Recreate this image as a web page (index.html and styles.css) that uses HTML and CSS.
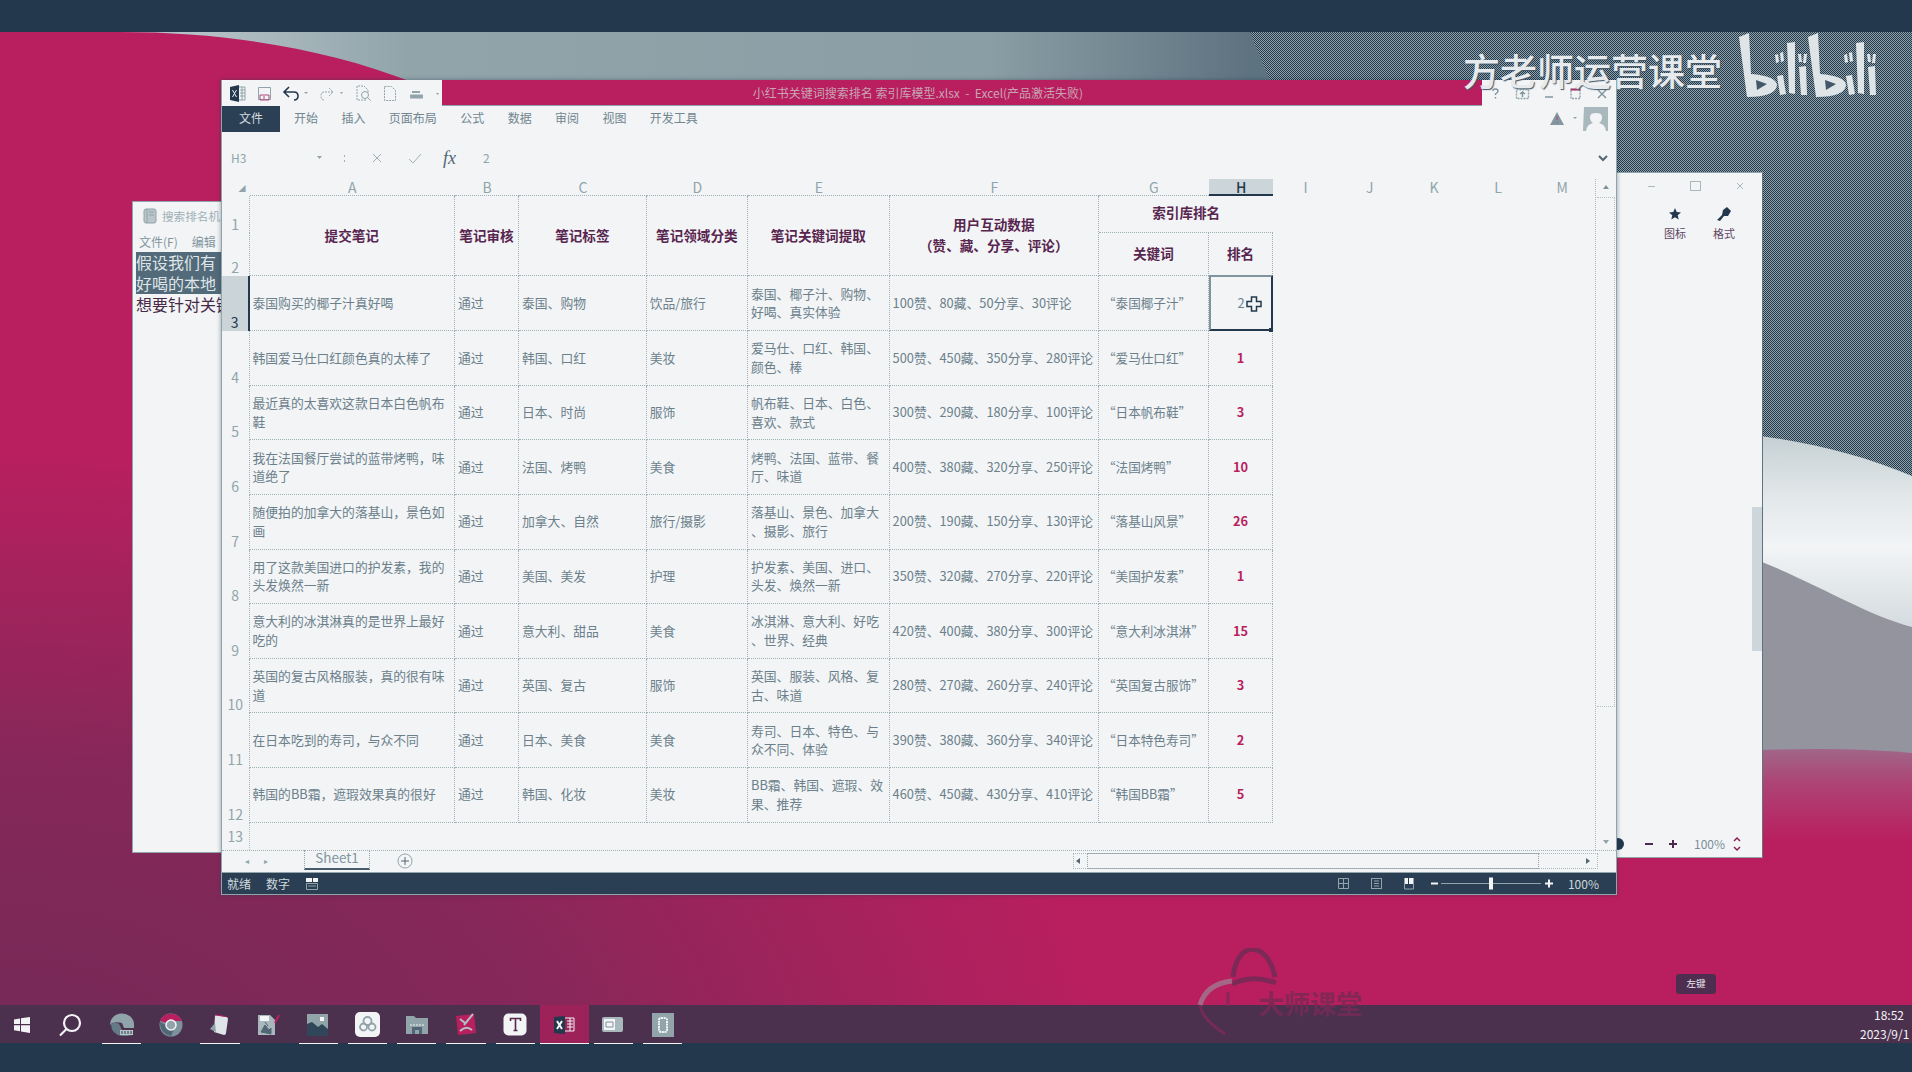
FILE: index.html
```html
<!DOCTYPE html>
<html lang="zh-CN">
<head>
<meta charset="utf-8">
<title>索引库模型</title>
<link rel="stylesheet" href="styles.css">
</head>
<body>
<div class="desktop">
<svg class="wallpaper" viewBox="0 0 1912 1072" width="1912" height="1072">
  <defs>
    <linearGradient id="top" x1="200" x2="1250" y1="0" y2="0" gradientUnits="userSpaceOnUse"><stop offset="0" stop-color="#b4c1c6"/><stop offset=".2" stop-color="#90a4aa"/><stop offset=".75" stop-color="#8a9ea5"/><stop offset="1" stop-color="#5e7380"/></linearGradient>
    <linearGradient id="white" x1="0" x2="0" y1="430" y2="625" gradientUnits="userSpaceOnUse"><stop offset="0" stop-color="#c3ced1"/><stop offset=".35" stop-color="#e3e8ea"/><stop offset=".6" stop-color="#f2f4f6"/><stop offset="1" stop-color="#d5dcdf"/></linearGradient>
    <linearGradient id="low" x1="0" x2="0" y1="745" y2="840" gradientUnits="userSpaceOnUse"><stop offset="0" stop-color="#9f6a8b"/><stop offset=".4" stop-color="#ad4475"/><stop offset="1" stop-color="#b91f5f"/></linearGradient>
    <radialGradient id="shade" cx="0" cy="0" r="1" gradientUnits="userSpaceOnUse" gradientTransform="translate(0 1072) scale(1100 620)"><stop offset="0" stop-color="#23384d" stop-opacity=".46"/><stop offset=".5" stop-color="#23384d" stop-opacity=".34"/><stop offset="1" stop-color="#23384d" stop-opacity="0"/></radialGradient>
    <pattern id="weave" width="2" height="2" patternUnits="userSpaceOnUse"><rect width="2" height="2" fill="#90a4aa"/><rect width="1" height="1" fill="#23384d"/><rect x="1" y="1" width="1" height="1" fill="#23384d"/></pattern>
  </defs>
  <rect width="1912" height="1072" fill="#b91f5f"/>
  <rect width="1912" height="1072" fill="url(#shade)"/>
  <path d="M120 32C230 32 330 50 412 82H1912V32Z" fill="url(#top)"/>
  <path d="M1250 32H1912V640H1500Z" fill="url(#weave)"/>
  <path d="M1700 430C1780 435 1850 450 1912 476V640H1700Z" fill="url(#white)"/>
  <path d="M1700 540C1800 570 1850 610 1912 627V800H1700Z" fill="#94949f"/>
  <path d="M1700 753Q1830 745 1912 753V860H1700Z" fill="url(#low)"/>
  <rect width="1912" height="32" fill="#23384d"/>
</svg>

<section class="win notes">
  <div class="notes-title"><svg width="14" height="16" viewBox="0 0 14 16"><rect x="1" y="1" width="12" height="14" rx="2" fill="#b9c5c9" stroke="#90a4aa"/><path d="M4 1v14M6 4h5M6 7h5" stroke="#90a4aa"/></svg><span>搜索排名机</span></div>
  <div class="notes-menu"><span>文件(F)</span><span>编辑</span></div>
  <div class="notes-text"><p class="picked">假设我们有</p><p class="picked">好喝的本地</p><p>想要针对关键</p></div>
</section>

<section class="win viewer">
  <div class="viewer-ctl"><svg width="110" height="28" viewBox="0 0 110 28" fill="none" stroke="#a9b8bd"><path d="M4 13.500h7"/><rect x="46.500" y="8.500" width="10" height="9"/><path d="M93 10l6 6M99 10l-6 6"/></svg></div>
  <div class="viewer-tools">
    <div class="tool"><svg width="14" height="14" viewBox="0 0 14 14"><path d="M7 1l1.700 4 4.300.4-3.300 2.800 1 4.300L7 10.200 3.300 12.500l1-4.300L1 5.400 5.300 5z" fill="#23384d"/></svg><span>图标</span></div>
    <div class="tool"><svg width="14" height="14" viewBox="0 0 14 14"><path d="M6 3l4-3 4 4-3 5-4 0-4 5-3-1 5-5z" fill="#23384d"/></svg><span>格式</span></div>
  </div>
  <div class="viewer-mid"><i class="thumb"></i></div>
  <div class="viewer-foot"><svg width="80" height="24" viewBox="0 0 80 24"><circle cx="8" cy="12" r="6" fill="#23384d"/><path d="M35 12h8M59 12h8M63 8v8" stroke="#4b2950" stroke-width="2"/></svg><span>100%</span><svg width="10" height="16" viewBox="0 0 10 16" fill="none" stroke="#8a2055" stroke-width="1.500"><path d="M2 5l3-3 3 3M2 11l3 3 3-3"/></svg></div>
</section>

<main class="win excel">
  <header class="titlebar">
    <svg class="qat" width="220" height="26" viewBox="0 0 220 26" fill="none" stroke="#90a4aa">
      <path d="M8 7l9-2v17l-9-2z" fill="#23384d" stroke="none"/><path d="M10.500 10l4 7M14.500 10l-4 7" stroke="#f2f4f6"/><path d="M17 7h6v13h-6M18 10h5M18 13h5M18 16h5M20 7v13"/>
      <path d="M36.500 7.500h12v12h-12z"/><path d="M38 15h9v5h-9zM42 16v3" stroke="#b04a78"/>
      <path d="M63 12h9q4 0 4 4t-4 4M67 7l-5 5 5 5" stroke="#23384d" stroke-width="1.600"/><path d="M82 12h4l-2 2z" fill="#90a4aa" stroke="none"/>
      <path d="M111 12h-9q-3 0-3 4t3 4M107 8l4 4-4 4" stroke-dasharray="2 1"/><path d="M118 12h3l-1.500 2z" fill="#90a4aa" stroke="none"/>
      <path d="M144 20h-9V6h7l4 4v3" stroke-dasharray="2 1"/><circle cx="143" cy="15" r="3.500"/><path d="M145.500 17.500l3 3"/>
      <path d="M162.500 6.500h7l4 4v10h-11z" stroke-dasharray="2 1"/>
      <path d="M190 12h8M189 15.500h11v2h-11z" stroke-width="1.800"/><path d="M214 13h3l-1.500 2z" fill="#90a4aa" stroke="none"/>
    </svg>
    <div class="caption"><span>小红书关键词搜索排名 索引库模型.xlsx&nbsp;&nbsp;-&nbsp;&nbsp;Excel(产品激活失败)</span></div>
    <svg class="winctl" width="134" height="26" viewBox="0 0 134 26" fill="none" stroke="#7d919a" stroke-width="1.400">
      <path d="M11 11q0-2 2.500-2t2.500 2q0 1.500-2.500 3v1M13.500 17v1.500"/><rect x="34.500" y="9.500" width="12" height="9" stroke="#90a4aa" stroke-dasharray="2 1"/><path d="M40.500 17v-5M38 14l2.500-2 2.500 2"/><path d="M63 17h8"/><rect x="89" y="9.500" width="9" height="9" stroke="#90a4aa" stroke-dasharray="2 1"/><path d="M88.500 9.500h10" stroke="#a53469" stroke-width="2"/><path d="M116 10l8 8M124 10l-8 8"/>
    </svg>
  </header>
  <nav class="ribbon">
    <span class="file">文件</span>
    <div class="tabs"><span>开始</span><span>插入</span><span>页面布局</span><span>公式</span><span>数据</span><span>审阅</span><span>视图</span><span>开发工具</span></div>
    <svg width="68" height="26" viewBox="0 0 68 26"><path d="M9 6l7 13H2z" fill="#8397a0"/><path d="M9 10v4M9 16v1" stroke="#b04a78"/><path d="M25 11h4l-2 2z" fill="#90a4aa"/><path d="M36 1h24v24h-2q-1-7-7-8 3-2 3-6t-6-4-6 4 3 6q-6 1-7 8h-3z" fill="#a9b8bd"/></svg>
  </nav>
  <div class="formula">
    <span class="ref">H3</span>
    <svg width="182" height="26" viewBox="0 0 182 26" fill="none" stroke="#a0b1b6"><path d="M58 11h5l-2.500 3z" fill="#90a4aa" stroke="none"/><path d="M85.500 10v2M85.500 15v2"/><path d="M114 9l8 8M122 9l-8 8M150 14l4 4 8-9"/></svg>
    <em>fx</em><span class="val">2</span>
    <svg class="more" width="12" height="8" viewBox="0 0 12 8"><path d="M2 2l4 4 4-4" fill="none" stroke="#526775" stroke-width="2"/></svg>
  </div>
  <div class="body">
    <div class="sheet">
      <div class="row letters"><span class="corner">◢</span><span>A</span><span>B</span><span>C</span><span>D</span><span>E</span><span>F</span><span>G</span><span class="on">H</span><span>I</span><span>J</span><span>K</span><span>L</span><span>M</span></div>
      <div class="head">
        <span class="n n1">1</span><span class="n n2">2</span>
        <b class="tall">提交笔记</b><b class="tall">笔记审核</b><b class="tall">笔记标签</b><b class="tall">笔记领域分类</b><b class="tall">笔记关键词提取</b><b class="tall">用户互动数据<br>（赞、藏、分享、评论）</b>
        <b class="wide">索引库排名</b><b class="kw">关键词</b><b class="rk">排名</b>
      </div>
      <div class="row"><span class="n on">3</span><span>泰国购买的椰子汁真好喝</span><span>通过</span><span>泰国、购物</span><span>饮品/旅行</span><span>泰国、椰子汁、购物、<br>好喝、真实体验</span><span>100赞、80藏、50分享、30评论</span><span>“泰国椰子汁”</span><span class="rank sel">2<svg class="cursor" width="18" height="18" viewBox="0 0 18 18"><path d="M6.500 2h5v4.500H16v5h-4.500V16h-5v-4.500H2v-5h4.500z" fill="#f2f4f6" stroke="#23384d" stroke-width="1.500"/></svg></span></div>
      <div class="row"><span class="n">4</span><span>韩国爱马仕口红颜色真的太棒了</span><span>通过</span><span>韩国、口红</span><span>美妆</span><span>爱马仕、口红、韩国、<br>颜色、棒</span><span>500赞、450藏、350分享、280评论</span><span>“爱马仕口红”</span><span class="rank">1</span></div>
      <div class="row"><span class="n">5</span><span>最近真的太喜欢这款日本白色帆布<br>鞋</span><span>通过</span><span>日本、时尚</span><span>服饰</span><span>帆布鞋、日本、白色、<br>喜欢、款式</span><span>300赞、290藏、180分享、100评论</span><span>“日本帆布鞋”</span><span class="rank">3</span></div>
      <div class="row"><span class="n">6</span><span>我在法国餐厅尝试的蓝带烤鸭，味<br>道绝了</span><span>通过</span><span>法国、烤鸭</span><span>美食</span><span>烤鸭、法国、蓝带、餐<br>厅、味道</span><span>400赞、380藏、320分享、250评论</span><span>“法国烤鸭”</span><span class="rank">10</span></div>
      <div class="row"><span class="n">7</span><span>随便拍的加拿大的落基山，景色如<br>画</span><span>通过</span><span>加拿大、自然</span><span>旅行/摄影</span><span>落基山、景色、加拿大<br>、摄影、旅行</span><span>200赞、190藏、150分享、130评论</span><span>“落基山风景”</span><span class="rank">26</span></div>
      <div class="row"><span class="n">8</span><span>用了这款美国进口的护发素，我的<br>头发焕然一新</span><span>通过</span><span>美国、美发</span><span>护理</span><span>护发素、美国、进口、<br>头发、焕然一新</span><span>350赞、320藏、270分享、220评论</span><span>“美国护发素”</span><span class="rank">1</span></div>
      <div class="row"><span class="n">9</span><span>意大利的冰淇淋真的是世界上最好<br>吃的</span><span>通过</span><span>意大利、甜品</span><span>美食</span><span>冰淇淋、意大利、好吃<br>、世界、经典</span><span>420赞、400藏、380分享、300评论</span><span>“意大利冰淇淋”</span><span class="rank">15</span></div>
      <div class="row"><span class="n">10</span><span>英国的复古风格服装，真的很有味<br>道</span><span>通过</span><span>英国、复古</span><span>服饰</span><span>英国、服装、风格、复<br>古、味道</span><span>280赞、270藏、260分享、240评论</span><span>“英国复古服饰”</span><span class="rank">3</span></div>
      <div class="row"><span class="n">11</span><span>在日本吃到的寿司，与众不同</span><span>通过</span><span>日本、美食</span><span>美食</span><span>寿司、日本、特色、与<br>众不同、体验</span><span>390赞、380藏、360分享、340评论</span><span>“日本特色寿司”</span><span class="rank">2</span></div>
      <div class="row"><span class="n">12</span><span>韩国的BB霜，遮瑕效果真的很好</span><span>通过</span><span>韩国、化妆</span><span>美妆</span><span>BB霜、韩国、遮瑕、效<br>果、推荐</span><span>460赞、450藏、430分享、410评论</span><span>“韩国BB霜”</span><span class="rank">5</span></div>
      <div class="last"><span class="n">13</span></div>
    </div>
    <div class="vscroll"><i class="up"></i><i class="vthumb"></i><i class="down"></i></div>
  </div>
  <div class="sheets">
    <span class="arrows"><i>◂</i><i>▸</i></span><span class="tab">Sheet1</span>
    <svg width="16" height="16" viewBox="0 0 16 16" fill="none" stroke="#90a4aa"><circle cx="8" cy="8" r="7"/><path d="M8 4v8M4 8h8" stroke="#526775"/></svg>
    <div class="hscroll"><i class="left"></i><i class="hthumb"></i><i class="right"></i></div>
  </div>
  <footer class="status">
    <span>就绪</span><span>数字</span><svg width="14" height="12" viewBox="0 0 14 12"><path d="M1 0h6v4H1zM8 0h5v4H8z" fill="#f2f4f6"/><path d="M1.500 5.500h11v6h-11zM3 8h8" fill="none" stroke="#90a4aa"/></svg>
    <svg class="zoom" width="230" height="22" viewBox="0 0 230 22" fill="none" stroke="#90a4aa">
      <path d="M4.500 5.500h10v10h-10zM4 10.500h11M9.500 5v11"/><rect x="37.500" y="5.500" width="10" height="10"/><path d="M40 8h5M40 10.500h5M40 13h5"/><path d="M70 5h9v6h-9z" fill="#f2f4f6" stroke="none"/><path d="M74.500 5v6" stroke="#23384d"/><path d="M70.500 5v11h9V5"/><path d="M107 10.500h100"/><path d="M97 10.500h7M211 10.500h8M215 6.500v8" stroke="#f2f4f6" stroke-width="2"/><rect x="155" y="4.500" width="4" height="12" fill="#f2f4f6" stroke="none"/>
    </svg>
    <span>100%</span>
  </footer>
</main>

<div class="brand"><span>方老师运营课堂</span>
  <svg width="144" height="66" viewBox="0 0 144 66" fill="#dfe4e7">
    <defs><g id="half"><path d="M2 5L12 1L14 42Q39 44 40 53Q39 65 10 65Z"/><path d="M19 48L30 52L20 58Z" fill="#425869"/><path d="M40 44l6-1 3 19-6 1zM50 11l8-1 0 52-6-1zM62 35l7-1 1 29-6 0zM38 23l3-1 1 8-3 1zM43 21l3-1 1 9-3 1zM61 22l3 0 1 8-3 0zM67 22l3 0-1 9-3 0z"/></g></defs>
    <use href="#half"/><use href="#half" x="69"/>
  </svg>
</div>
<div class="key">左键</div>

<footer class="taskbar">
  <span class="it start"><svg width="18" height="18" viewBox="0 0 18 18" fill="#f2f4f6"><path d="M1 3.500l6-1V8H1zM8 2.300L17 1v7H8zM1 9.300h6v6l-6-1zM8 9.300h9V17l-9-1.400z"/></svg></span>
  <span class="it find"><svg width="24" height="24" viewBox="0 0 24 24" fill="none" stroke="#f2f4f6" stroke-width="2.200"><circle cx="14" cy="10" r="8"/><path d="M8.500 16L2 22.500"/></svg></span>
  <span class="it run"><svg width="24" height="24" viewBox="0 0 24 24"><path d="M0 12A12 11 0 0 1 24 11L24 15H14l-2-5Q3 8 0 12" fill="#90a4aa"/><path d="M1 11q8-4 10 4t13 8H12Q1 21 1 11" fill="#647a86"/><path d="M10 17h13v5H10z" fill="#b9c5c9"/><path d="M12 18v3M15 18v3M18 18v3M21 18v3" stroke="#23384d"/></svg></span>
  <span class="it"><svg width="24" height="24" viewBox="0 0 24 24"><circle cx="12" cy="12" r="11.500" fill="#7e929b"/><path d="M1 8A12 12 0 0 1 23 8l-8 0-7 2z" fill="#b91f5f"/><path d="M1 9q0 12 11 14l3-7z" fill="#526775"/><circle cx="12" cy="12" r="5" fill="#90a4aa" stroke="#f2f4f6" stroke-width="1.500"/></svg></span>
  <span class="it run"><svg width="22" height="22" viewBox="0 0 22 22"><path d="M6 2q0-1 1-1l10 2q2 0 2 2l-2 14q0 2-2 2l-10-3z" fill="#dfe5e8"/><path d="M1 15l5-6 1 9z" fill="#90a4aa"/><path d="M6 1l11 1.500" stroke="#b91f5f"/></svg></span>
  <span class="it"><svg width="22" height="22" viewBox="0 0 22 22"><path d="M0 1h12l5 5v15H0z" fill="#a9b8bd"/><path d="M2 2h9v5H2z" fill="#f2f4f6"/><path d="M3 18l4-7 4 5 2-2v6zM7 8l3 4" fill="#526775" stroke="#526775"/><path d="M17 9l4-8" stroke="#b91f5f" stroke-width="2"/></svg></span>
  <span class="it run"><svg width="22" height="22" viewBox="0 0 22 22"><path d="M0 0h21v22H0z" fill="#90a4aa"/><path d="M0 22V10l5-2 6 5 4-3 6 5v7z" fill="#304659"/><path d="M13 3h4v4h-4z" fill="#f2f4f6"/></svg></span>
  <span class="it run"><svg width="25" height="25" viewBox="0 0 25 25" fill="none"><rect width="25" height="25" rx="5" fill="#f2f4f6"/><g stroke="#90a4aa" stroke-width="1.800"><circle cx="12.500" cy="9" r="4"/><circle cx="8.500" cy="15" r="3.500"/><circle cx="17" cy="15" r="3.500"/></g></svg></span>
  <span class="it run"><svg width="24" height="20" viewBox="0 0 24 20"><path d="M1 1h8l2 2h12v16H1z" fill="#90a4aa"/><path d="M5 10h14" stroke="#f2f4f6" stroke-dasharray="2 1"/><path d="M7 12h10v7H7z" fill="#526775"/><path d="M10 15h4v4h-4z" fill="#90a4aa"/></svg></span>
  <span class="it run"><svg width="22" height="24" viewBox="0 0 22 24"><path d="M1 3l18-2 2 19-18 2z" fill="#b91f5f"/><path d="M5 6l5 4M18 1L9 12M5 18q6-6 12-1" fill="none" stroke="#b3c0c5" stroke-width="2"/></svg></span>
  <span class="it run"><svg width="24" height="24" viewBox="0 0 24 24"><rect x=".5" y=".5" width="23" height="22" rx="5" fill="#f2f4f6"/><path d="M7.500 8V5.500h10V8M12.500 5.500v12M10.500 17.500h4" fill="none" stroke="#582948" stroke-width="1.600"/></svg></span>
  <span class="it run active"><svg width="22" height="18" viewBox="0 0 22 18"><path d="M1 1l11-1v18L1 17z" fill="#23384d"/><path d="M4 5l5 8M9 5l-5 8" stroke="#f2f4f6" stroke-width="2"/><path d="M12 2h9v13h-9M14 5h6M14 8h6M14 11h6M17 2v13" fill="none" stroke="#f2f4f6"/></svg></span>
  <span class="it run"><svg width="22" height="16" viewBox="0 0 22 16"><rect width="21" height="15" rx="2" fill="#a9b8bd"/><path d="M2 2h11v11H2z" fill="#f2f4f6"/><path d="M4 5h7v5H4z" fill="none" stroke="#7e929b"/></svg></span>
  <span class="it run"><svg width="24" height="24" viewBox="0 0 24 24"><path d="M1 0h22v24H1z" fill="#90a4aa"/><rect x="8" y="5" width="8" height="14" rx="2" fill="none" stroke="#f2f4f6" stroke-width="2" stroke-dasharray="2 .6"/></svg></span>
  <div class="clock"><span>18:52</span><span>2023/9/1</span></div>
</footer>
<svg class="emblem" width="84" height="94" viewBox="0 0 84 94" fill="none" stroke="#6f2c56" stroke-width="5">
  <path d="M36 29C40-8 70-8 78 29M35 36Q57 26 79 35"/>
  <path d="M3 57Q9 36 35 33" stroke="#a07a90"/><path d="M3 58Q6 72 28 86M31 44v14" stroke="#82285a" stroke-width="3"/>
</svg>
<div class="mark">大师课堂</div>
</div>
</body>
</html>
```
FILE: styles.css
```css
* { box-sizing: border-box; }
body { margin: 0; font-family: "Noto Sans CJK SC", "Noto Sans", sans-serif; }
p { margin: 0; }
i { font-style: normal; }
svg { display: block; flex: none; }
.desktop { position: relative; width: 1912px; height: 1072px; overflow: hidden; background: #b91f5f; }
.wallpaper { position: absolute; left: 0; top: 0; }
.win { position: absolute; display: flex; flex-direction: column; background: #f2f4f6; overflow: hidden; white-space: nowrap; }
.mark { position: absolute; left: 1258px; top: 985px; font-size: 26px; line-height: 36px; font-weight: 700; color: #772a56; opacity: .8; }
.emblem { position: absolute; left: 1197px; top: 948px; opacity: .8; }

/* text editor at the left */
.notes { left: 132px; top: 201px; width: 480px; height: 652px; border: 1px solid #90a4aa; }
.notes-title { display: flex; align-items: center; gap: 5px; height: 28px; padding-left: 10px; font-size: 11.600px; color: #a0b1b6; }
.notes-menu { display: flex; align-items: center; gap: 14px; height: 22px; padding-left: 6px; font-size: 12px; color: #8396a0; }
.notes-text { padding-left: 3px; font-size: 16px; line-height: 21px; color: #462947; }
.notes-text p { height: 21px; }
.picked { background: #526a79; color: #dfe5e8; }

/* viewer at the right */
.viewer { left: 1400px; top: 172px; width: 363px; height: 686px; border: 1px solid #90a4aa; border-right-color: #60747f; }
.viewer-ctl { display: flex; justify-content: flex-end; height: 28px; padding-right: 8px; }
.viewer-tools { display: flex; justify-content: flex-end; gap: 27px; padding: 6px 27px 0 0; height: 62px; }
.tool { display: flex; flex-direction: column; align-items: center; gap: 4px; font-size: 11px; line-height: 16px; color: #5f4763; }
.viewer-mid { flex: 1; display: flex; justify-content: flex-end; padding-top: 244px; }
.thumb { width: 10px; height: 144px; background: #cdd6da; }
.viewer-foot { display: flex; align-items: center; justify-content: flex-end; gap: 4px; height: 27px; padding-right: 20px; font-size: 12px; color: #7c8f99; }
.viewer-foot span { width: 34px; }

/* spreadsheet */
.excel { left: 221px; top: 80px; width: 1396px; height: 815px; border: 1px solid #90a4aa; border-top: 0; box-shadow: 0 0 4px rgba(35, 56, 77, .5); }
.titlebar { display: flex; height: 26px; flex: none; }
.caption { flex: 1; display: flex; align-items: center; justify-content: center; padding-right: 88px; background: #b91f5f; color: #c7a5b5; font-size: 12px; border-bottom: 1px solid #90a4aa; }
.ribbon { display: flex; align-items: center; height: 26px; flex: none; font-size: 12px; color: #71858f; }
.file { width: 58px; height: 26px; line-height: 23px; text-align: center; background: #2b4054; color: #d5dde0; }
.tabs { flex: 1; display: flex; gap: 23.400px; padding-left: 14px; line-height: 24px; height: 26px; }
.formula { display: flex; align-items: center; height: 47px; flex: none; padding: 4px 7px 0 9px; font-size: 12px; color: #90a4aa; }
.formula .ref { width: 28px; }
.formula em { font: italic 18px/20px "Liberation Serif", serif; color: #526775; margin-left: 2px; }
.formula .val { margin-left: 27px; flex: 1; }
.body { display: flex; height: 670.500px; flex: none; }
.sheet { width: 1373px; font-size: 12.800px; line-height: 18.600px; color: #6b808b; }
.row, .head { display: grid; grid-template-columns: 27.500px 205.500px 64px 127.700px 101.300px 141.600px 209.400px 109.800px 64.700px 64.200px 64.200px 64.200px 64.200px 64.200px; }
.row { height: 54.620px; }
.row > span { display: flex; flex-direction: column; justify-content: center; align-items: flex-start; padding-left: 3px; border-right: 1px dotted #a0b1b6; border-bottom: 1px dotted #a0b1b6; }
.row > span:nth-child(8) { padding-left: 4px; font-size: 12.600px; }
.row > .n { justify-content: flex-end; align-items: center; padding: 0; border-bottom: 0; font-size: 14px; line-height: 17px; color: #90a4aa; }
.row > .n.on { background: #cbd4d8; color: #23384d; border-right: 2px solid #23384d; }
.row > .rank { align-items: center; padding: 0; font-weight: 700; color: #b91f5f; }
.row > .rank.sel { position: relative; border: 2px solid #23384d; border-top-color: #8094a0; border-left-color: #8094a0; margin-top: -1px; font-weight: 400; color: #6b808b; z-index: 1; }
.sel::after { content: ""; position: absolute; right: -2px; bottom: -3px; width: 4px; height: 4px; background: #23384d; }
.cursor { position: absolute; left: 34px; top: 18px; }
.row.letters { height: 17px; }
.letters > span { align-items: center; padding: 0 !important; font-size: 14px !important; line-height: 14px; color: #90a4aa; border-right: 0; }
.letters > span:nth-child(n+10) { border-bottom-color: transparent; }
.letters > .corner { font-size: 7px !important; align-items: flex-end; padding-right: 4px !important; border-bottom: 0; }
.letters > .on { background: #ccd5d9; color: #23384d; font-weight: 500; border-bottom: 2px solid #23384d; }
.head { grid-template-rows: 37.300px 43.200px; font-size: 13.600px; line-height: 21px; color: #58254f; text-align: center; }
.head b { display: flex; align-items: center; justify-content: center; padding-bottom: 1px; border-right: 1px dotted #a0b1b6; border-bottom: 1px dotted #a0b1b6; }
.head .tall { grid-row: 1 / 3; }
.head .wide { grid-column: 8 / 10; border-right: 0; padding-bottom: 3px; }
.head .kw { grid-column: 8; grid-row: 2; }
.head .rk { grid-column: 9; grid-row: 2; }
.head .n { grid-column: 1; display: flex; justify-content: center; align-items: flex-end; font-size: 14px; line-height: 17px; color: #90a4aa; border-right: 1px dotted #a0b1b6; }
.n1 { grid-row: 1; }
.n2 { grid-row: 2; }
.last { height: 27px; display: flex; }
.last .n { width: 27.500px; text-align: center; line-height: 26px; font-size: 14px; color: #90a4aa; border-right: 1px dotted #b0bec3; }
.vscroll { flex: 1; display: flex; flex-direction: column; align-items: center; border-left: 1px dotted #a9b8bd; padding-top: 6px; }
.up, .down { border: 3px solid transparent; border-top: 0; border-bottom: 4px solid #7e929b; height: 0; width: 0; }
.vthumb { width: 18px; height: 510px; margin-top: 8px; border: 1px dotted #b4c1c6; border-left: 0; }
.down { margin-top: 133px; border-bottom: 0; border-top: 4px solid #90a4aa; }
.sheets { display: flex; height: 22.500px; flex: none; border-top: 1px dotted #a0b1b6; align-items: center; }
.arrows { width: 82px; display: flex; gap: 15px; padding-left: 23px; font-size: 8px; line-height: 16px; color: #90a4aa; }
.tab { width: 66px; height: 20px; margin-top: -2px; line-height: 15px; text-align: center; font-size: 13.500px; color: #81959f; border: 1px dotted #90a4aa; border-top: 0; border-bottom: 2px solid #465c6c; }
.tab + svg { margin-left: 27px; }
.hscroll { margin-left: 660px; width: 525px; height: 16px; display: flex; align-items: center; justify-content: space-between; border: 1px dotted #a9b8bd; padding: 0 7px 0 2px; }
.left, .right { border: 3px solid transparent; border-left: 0; border-right: 4px solid #526775; }
.right { border-right: 0; border-left: 4px solid #526775; }
.hthumb { width: 452px; height: 16px; border: 1px dotted #90a4aa; margin-right: 41px; }
.status { display: flex; align-items: center; flex: 1; padding: 0 17px 3px 5px; background: #2a3f53; border-top: 1px solid #90a4aa; font-size: 12px; line-height: 18px; color: #cfd8dc; }
.status > span { margin-right: 15px; }
.status .zoom { margin-left: auto; margin-right: 4px; }
.status > span:last-child { margin: 0; }

/* overlay marks */
.brand { position: absolute; left: 1463px; top: 32px; display: flex; gap: 14px; }
.brand span { font-size: 37px; line-height: 77px; width: 260px; white-space: nowrap; font-weight: 500; color: #e6eaed; text-shadow: 1px 1px 1px #425869; }
.key { position: absolute; left: 1676px; top: 974px; width: 40px; height: 20px; border-radius: 3px; background: #4f2d50; color: #e6eaed; font-size: 9.500px; line-height: 19px; text-align: center; }

.taskbar { position: absolute; left: 0; top: 1005px; width: 1912px; height: 67px; display: flex; align-items: flex-start; background: linear-gradient(#4c314f 0 38px, #23384d 38px); }
.it { width: 49.200px; height: 39px; display: flex; align-items: center; justify-content: center; position: relative; }
.start { width: 43px; }
.find { width: 54px; }
.run::after { content: ""; position: absolute; left: 5px; right: 5px; bottom: 0; height: 1px; background: #f2f4f6; }
.active { background: #9c2259; }
.active::after { left: 0; right: 0; }
.clock { margin-left: auto; width: 52px; font-size: 12px; line-height: 19px; color: #f2f4f6; display: flex; flex-direction: column; white-space: nowrap; }
.clock span:first-child { padding-left: 14px; }
```
